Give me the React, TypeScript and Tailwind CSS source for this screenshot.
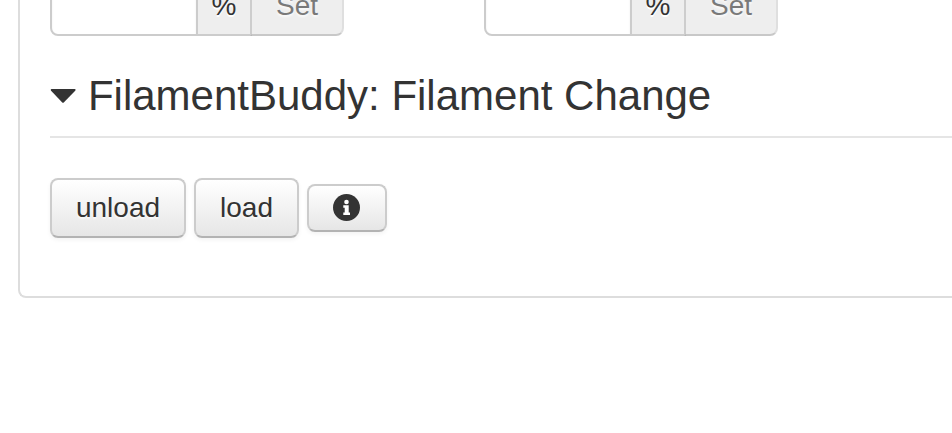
import React from "react";

const buttonBase =
  "flex items-center justify-center border-2 border-[#cccccc] border-b-[#b3b3b3] bg-linear-to-b from-white to-[#e6e6e6] text-[#333333] [text-shadow:0_2px_2px_rgba(255,255,255,0.75)] shadow-[inset_0_2px_0_rgba(255,255,255,0.2),0_2px_4px_rgba(0,0,0,0.05)]";

function CaretDown() {
  return (
    <svg className="h-[14px] w-[26.25px]" viewBox="0 0 26.25 14" fill="currentColor" aria-hidden="true">
      <path d="M1.6 0H24.7Q26.2 0.4 25.2 1.7L14 13.2Q13 14.2 12 13.2L1.1 1.7Q0.2 0.4 1.6 0Z" />
    </svg>
  );
}

function InfoCircle() {
  return (
    <svg className="mr-px mb-px size-[27px]" viewBox="0 0 27 27" aria-hidden="true">
      <circle cx="13.5" cy="13.5" r="13.5" fill="#333333" />
      <circle cx="13.5" cy="8" r="2.3" fill="#ffffff" />
      <path d="M10.3 11.2H15.7V18.5H17V21H10.3V18.5H11.7V13.7H10.3Z" fill="#ffffff" />
    </svg>
  );
}

function PercentInput() {
  return (
    <div className="flex h-[60px] w-[294px] text-[28px] leading-10">
      <input
        aria-label="Percentage"
        className="w-[148px] rounded-l-lg border-2 border-[#cccccc] bg-white shadow-[inset_0_2px_2px_rgba(0,0,0,0.075)] outline-none"
      />
      <span className="-ml-0.5 flex w-[56px] items-center justify-center border-2 border-[#cccccc] bg-[#eeeeee] text-[#333333] [text-shadow:0_2px_0_#ffffff]">
        %
      </span>
      <button
        disabled
        className="-ml-0.5 flex w-[94px] items-center justify-center rounded-r-lg border-2 border-black/10 border-b-black/25 bg-[#e6e6e6] text-[#333333] opacity-65 [text-shadow:0_2px_2px_rgba(255,255,255,0.75)]"
      >
        Set
      </button>
    </div>
  );
}

export default function App() {
  return (
    <div className="h-[433px] w-[952px] overflow-hidden bg-white pl-[18px] font-['Liberation_Sans',Arial,sans-serif]">
      <div className="-mt-[24px] h-[322px] rounded-bl-lg border-b-2 border-l-2 border-[#dddddd] pl-[30px]">
        <div className="flex gap-[140px]">
          <PercentInput />
          <PercentInput />
        </div>
        <h1 className="mt-5 flex h-[82px] items-center border-b-2 border-[#e5e5e5] text-[42px] leading-[80px] text-[#333333]">
          <CaretDown />
          <span className="ml-[11.67px] whitespace-nowrap">FilamentBuddy: Filament Change</span>
        </h1>
        <div className="mt-10 flex items-center gap-2 text-[28px] leading-10">
          <button className={buttonBase + " h-[60px] w-[136px] rounded-lg"}>unload</button>
          <button className={buttonBase + " h-[60px] w-[105px] rounded-lg"}>load</button>
          <button aria-label="Info" className={buttonBase + " h-[48px] w-[80px] rounded-lg"}>
            <InfoCircle />
          </button>
        </div>
      </div>
    </div>
  );
}
